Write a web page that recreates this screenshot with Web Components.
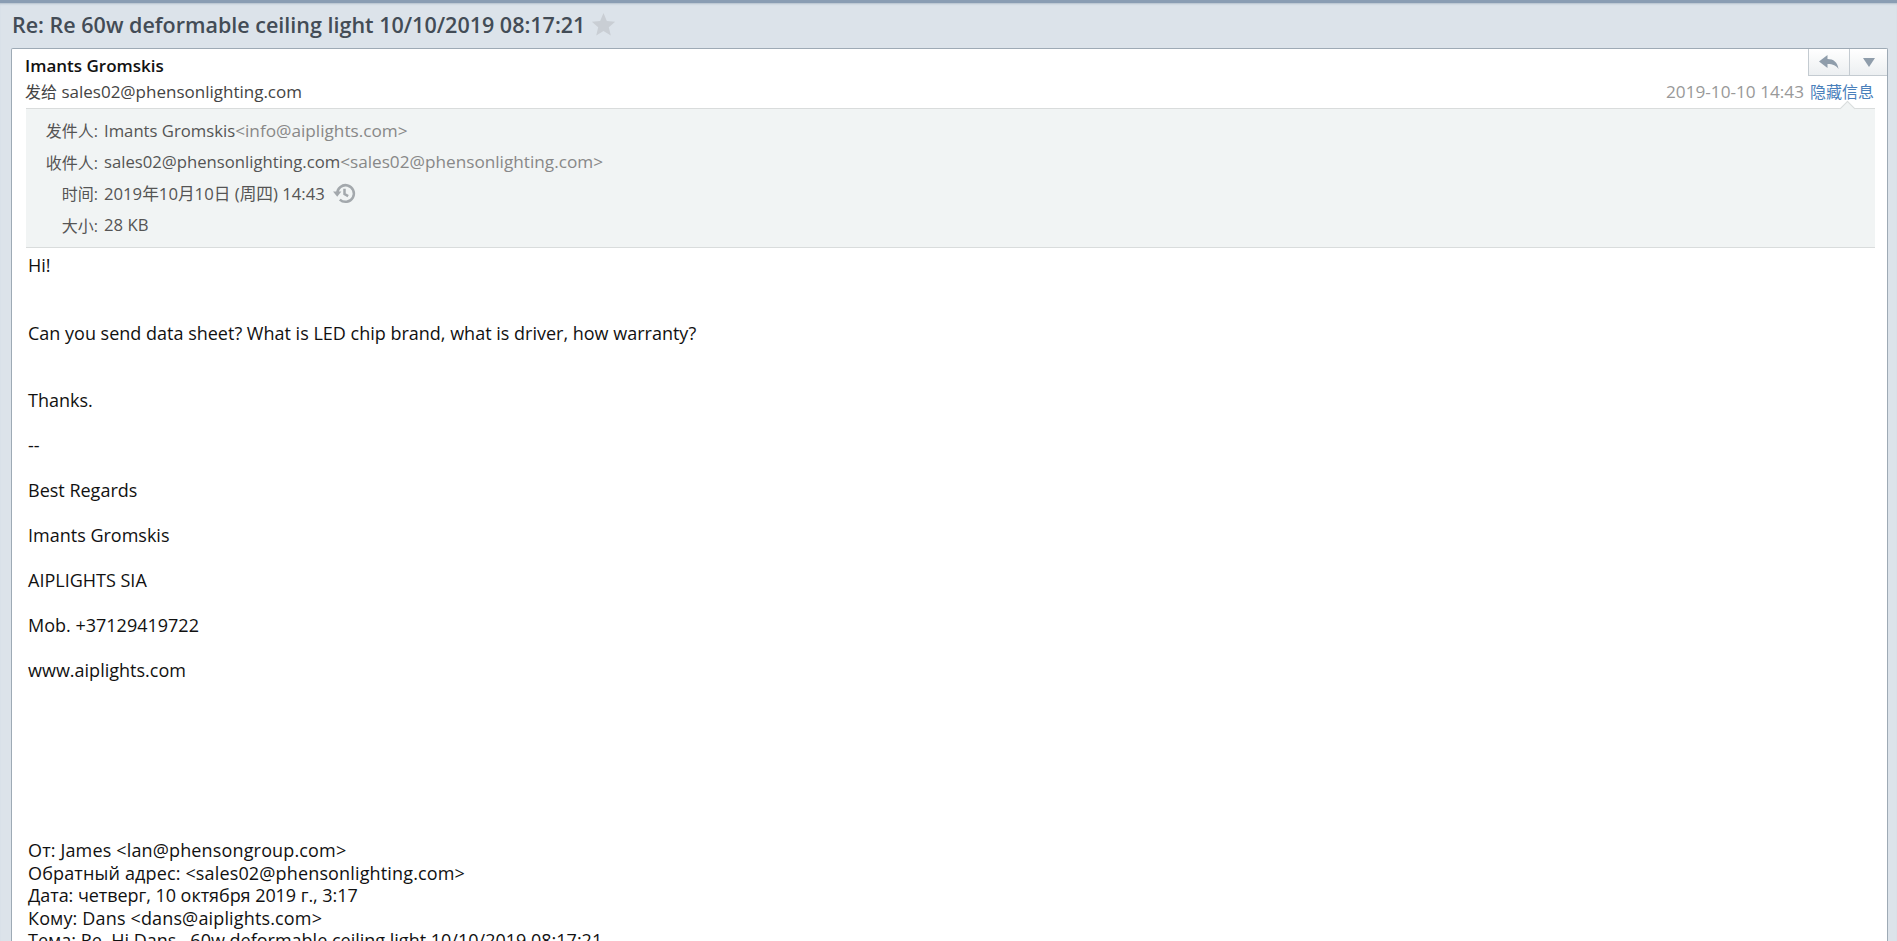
<!DOCTYPE html>
<html>
<head>
<meta charset="utf-8">
<title>Mail</title>
<style>
  html, body { margin: 0; height: 100%; overflow: hidden; background: #dce3ea; }
  body { font-family: "Open Sans", "Noto Sans CJK SC", sans-serif; }
</style>
</head>
<body>
<mail-view>
  <mail-subject slot="subject">Re: Re 60w deformable ceiling light 10/10/2019 08:17:21</mail-subject>
  <mail-card slot="card">
    <mail-head></mail-head>
    <mail-details>
      <detail-row label="发件人:" value="Imants Gromskis" extra="&lt;info@aiplights.com&gt;"></detail-row>
      <detail-row label="收件人:" value="sales02@phensonlighting.com" extra="&lt;sales02@phensonlighting.com&gt;"></detail-row>
      <detail-row label="时间:" value="2019年10月10日 (周四) 14:43" history></detail-row>
      <detail-row label="大小:" value="28 KB"></detail-row>
    </mail-details>
    <mail-body>
      <p>Hi!</p>
      <p><br></p>
      <p class="gap">Can you send data sheet? What is LED chip brand, what is driver, how warranty?</p>
      <p><br></p>
      <p class="gap">Thanks.</p>
      <p class="gap">--</p>
      <p class="gap">Best Regards</p>
      <p class="gap">Imants Gromskis</p>
      <p class="gap">AIPLIGHTS SIA</p>
      <p class="gap">Mob. +37129419722</p>
      <p class="gap">www.aiplights.com</p>
      <p class="quote first">От: James &lt;lan@phensongroup.com&gt;</p>
      <p class="quote">Обратный адрес: &lt;sales02@phensonlighting.com&gt;</p>
      <p class="tight">Дата: четверг, 10 октября 2019 г., 3:17</p>
      <p class="quote">Кому: Dans &lt;dans@aiplights.com&gt;</p>
      <p>Тема: Re, Hi Dans , 60w deformable ceiling light 10/10/2019 08:17:21</p>
    </mail-body>
  </mail-card>
</mail-view>

<script>
class MailView extends HTMLElement {
  constructor() {
    super();
    this.attachShadow({ mode: 'open' });
    this.shadowRoot.innerHTML = `
      <style>
        :host { display: block; height: 941px; overflow: hidden; border-top: 3px solid #8a9db3; box-sizing: border-box; }
        .wrap { padding: 0 9px 0 11px; display: flex; flex-direction: column; box-shadow: inset 0 2px 2px -1px #b4c0cc; }
        .top { height: 45px; display: flex; align-items: center; }
      </style>
      <div class="wrap">
        <div class="top"><slot name="subject"></slot></div>
        <slot name="card"></slot>
      </div>
    `;
  }
}

class MailSubject extends HTMLElement {
  constructor() {
    super();
    this.attachShadow({ mode: 'open' });
    this.shadowRoot.innerHTML = `
      <style>
        :host { display: flex; align-items: center; gap: 6px; margin-left: 1px; margin-top: -2px; font: 600 21.500px "Open Sans", sans-serif; color: #434c56; }
        svg { width: 25px; height: 25px; fill: #c9ced4; }
      </style>
      <span><slot></slot></span>
      <svg viewBox="0 0 24 24"><path d="M12 1l3.200 7.600 8 .7-6.100 5.300 1.900 8L12 18.300l-7 4.300 1.900-8L.8 9.300l8-.7z"/></svg>
    `;
  }
}

class MailCard extends HTMLElement {
  constructor() {
    super();
    this.attachShadow({ mode: 'open' });
    this.shadowRoot.innerHTML = `
      <style>
        :host { display: block; position: relative; background: #fff; border: 1px solid #9eaab5; border-bottom: 0; border-radius: 2px 2px 0 0; padding: 0 12px 0 14px; height: 900px; }
        .actions { position: absolute; top: 0; right: 0; display: flex; height: 26px; border: 1px solid #c4cbd1; border-top: 0; border-right: 0; background: linear-gradient(#fff, #eceff1); }
        .actions div { display: flex; align-items: center; justify-content: center; }
        .reply { width: 40px; border-right: 1px solid #c4cbd1; }
        .more { width: 37px; }
        svg { fill: #8f9dab; }
      </style>
      <div class="actions">
        <div class="reply"><svg width="20" height="16" viewBox="0 0 20 16"><path d="M0 7.500 8.500 1v4c6 0 10 3 11 10-2.200-3.400-5.500-5-11-5v4z"/></svg></div>
        <div class="more"><svg width="12" height="9" viewBox="0 0 12 9"><path d="M0 0h12L6 9z"/></svg></div>
      </div>
      <slot></slot>
    `;
  }
}

class MailHead extends HTMLElement {
  constructor() {
    super();
    this.attachShadow({ mode: 'open' });
    this.shadowRoot.innerHTML = `
      <style>
        :host { display: block; height: 59px; padding-top: 4px; box-sizing: border-box; font: 17px/26px "Open Sans", "Noto Sans CJK SC", sans-serif; color: #444; }
        .name { font-weight: 600; color: #111; margin-left: -1px; }
        .line { display: flex; justify-content: space-between; margin-left: -1px; }
        .cjk { font-size: 16px; }
        .date { color: #999; font-size: 17.200px; }
        a { color: #4a80bb; margin-left: 6px; margin-right: 1px; font-size: 16px; }
      </style>
      <div class="name">Imants Gromskis</div>
      <div class="line">
        <span><span class="cjk">发给</span> sales02@phensonlighting.com</span>
        <span><span class="date">2019-10-10 14:43</span><a>隐藏信息</a></span>
      </div>
    `;
  }
}

class MailDetails extends HTMLElement {
  constructor() {
    super();
    this.attachShadow({ mode: 'open' });
    this.shadowRoot.innerHTML = `
      <style>
        :host { display: block; position: relative; background: #f1f4f4; border-top: 1px solid #d9dcdc; border-bottom: 1px solid #d9dcdc; padding: 5.500px 0 6.500px; }
        .arrow { position: absolute; top: -6px; right: 22px; width: 10px; height: 10px; background: #f1f4f4; border-top: 1px solid #d9dcdc; border-left: 1px solid #d9dcdc; transform: rotate(45deg); }
      </style>
      <div class="arrow"></div>
      <slot></slot>
    `;
  }
}

class DetailRow extends HTMLElement {
  constructor() {
    super();
    this.attachShadow({ mode: 'open' });
  }

  connectedCallback() {
    const history = this.hasAttribute('history');

    this.shadowRoot.innerHTML = `
      <style>
        :host { display: flex; align-items: center; height: 31.500px; font: 16.700px "Open Sans", "Noto Sans CJK SC", sans-serif; color: #555; white-space: pre; }
        .label { width: 72px; text-align: right; margin-right: 6px; flex-shrink: 0; font-size: 16px; }
        .extra { color: #888; font-size: 17.200px; }
        svg { width: 25px; height: 25px; margin-left: 7px; fill: none; stroke: #a3a8ac; stroke-width: 2.400; }
      </style>
      <span class="label"></span>
      <span class="value"></span><span class="extra"></span>
      ${history ? '<svg viewBox="0 0 24 24"><path d="M5 12a8 8 0 1 1 2.500 5.800"/><path d="M12 7.500V12.500l3.500 2"/><path d="M1 10 5 15l4-5z" fill="#a3a8ac" stroke="none"/></svg>' : ''}
    `;
    // attributes hold < and >, so they go in as text
    this.shadowRoot.querySelector('.label').textContent = this.getAttribute('label');
    this.shadowRoot.querySelector('.value').textContent = this.getAttribute('value');
    this.shadowRoot.querySelector('.extra').textContent = this.getAttribute('extra') || '';
  }
}

class MailBody extends HTMLElement {
  constructor() {
    super();
    this.attachShadow({ mode: 'open' });
    this.shadowRoot.innerHTML = `
      <style>
        :host { display: block; padding: 6px 2px; font: 18px/22.500px "Open Sans", "Noto Sans CJK SC", sans-serif; color: #111; }
        ::slotted(p) { margin: 0; min-height: 22.500px; }
        ::slotted(p.gap) { margin-top: 22.500px; }
        ::slotted(p.quote) { letter-spacing: .15px; }
        ::slotted(p.tight) { letter-spacing: -.05px; }
        ::slotted(p.first) { margin-top: 157.500px; }
      </style>
      <slot></slot>
    `;
  }
}

customElements.define('mail-view', MailView);
customElements.define('mail-subject', MailSubject);
customElements.define('mail-card', MailCard);
customElements.define('mail-head', MailHead);
customElements.define('mail-details', MailDetails);
customElements.define('detail-row', DetailRow);
customElements.define('mail-body', MailBody);
</script>
</body>
</html>
